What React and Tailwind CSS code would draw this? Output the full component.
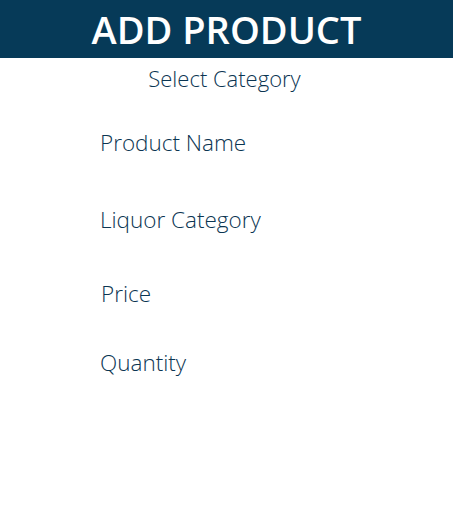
export default function App() {
  const font = { fontFamily: '"Open Sans", "Noto Sans", sans-serif' };
  return (
    <div className="w-[453px] h-[520px] bg-white" style={font}>
      <div className="h-[58px] bg-[#063a58] flex items-center justify-center">
        <h1 className="text-white font-semibold text-[38px] leading-none">ADD PRODUCT</h1>
      </div>
      <div className="flex justify-center pr-[4px] mt-[5px]">
        <p className="text-[#0b3552] text-[22px] font-light leading-[30px]">Select Category</p>
      </div>
      <div className="pl-[100px] flex flex-col text-[#0b3552] text-[22.5px] font-light">
        <p className="mt-[35px] leading-[30px]">Product Name</p>
        <p className="mt-[47px] leading-[30px]">Liquor Category</p>
        <p className="mt-[44px] leading-[30px] pl-[1px]">Price</p>
        <p className="mt-[39px] leading-[30px]">Quantity</p>
      </div>
    </div>
  );
}
